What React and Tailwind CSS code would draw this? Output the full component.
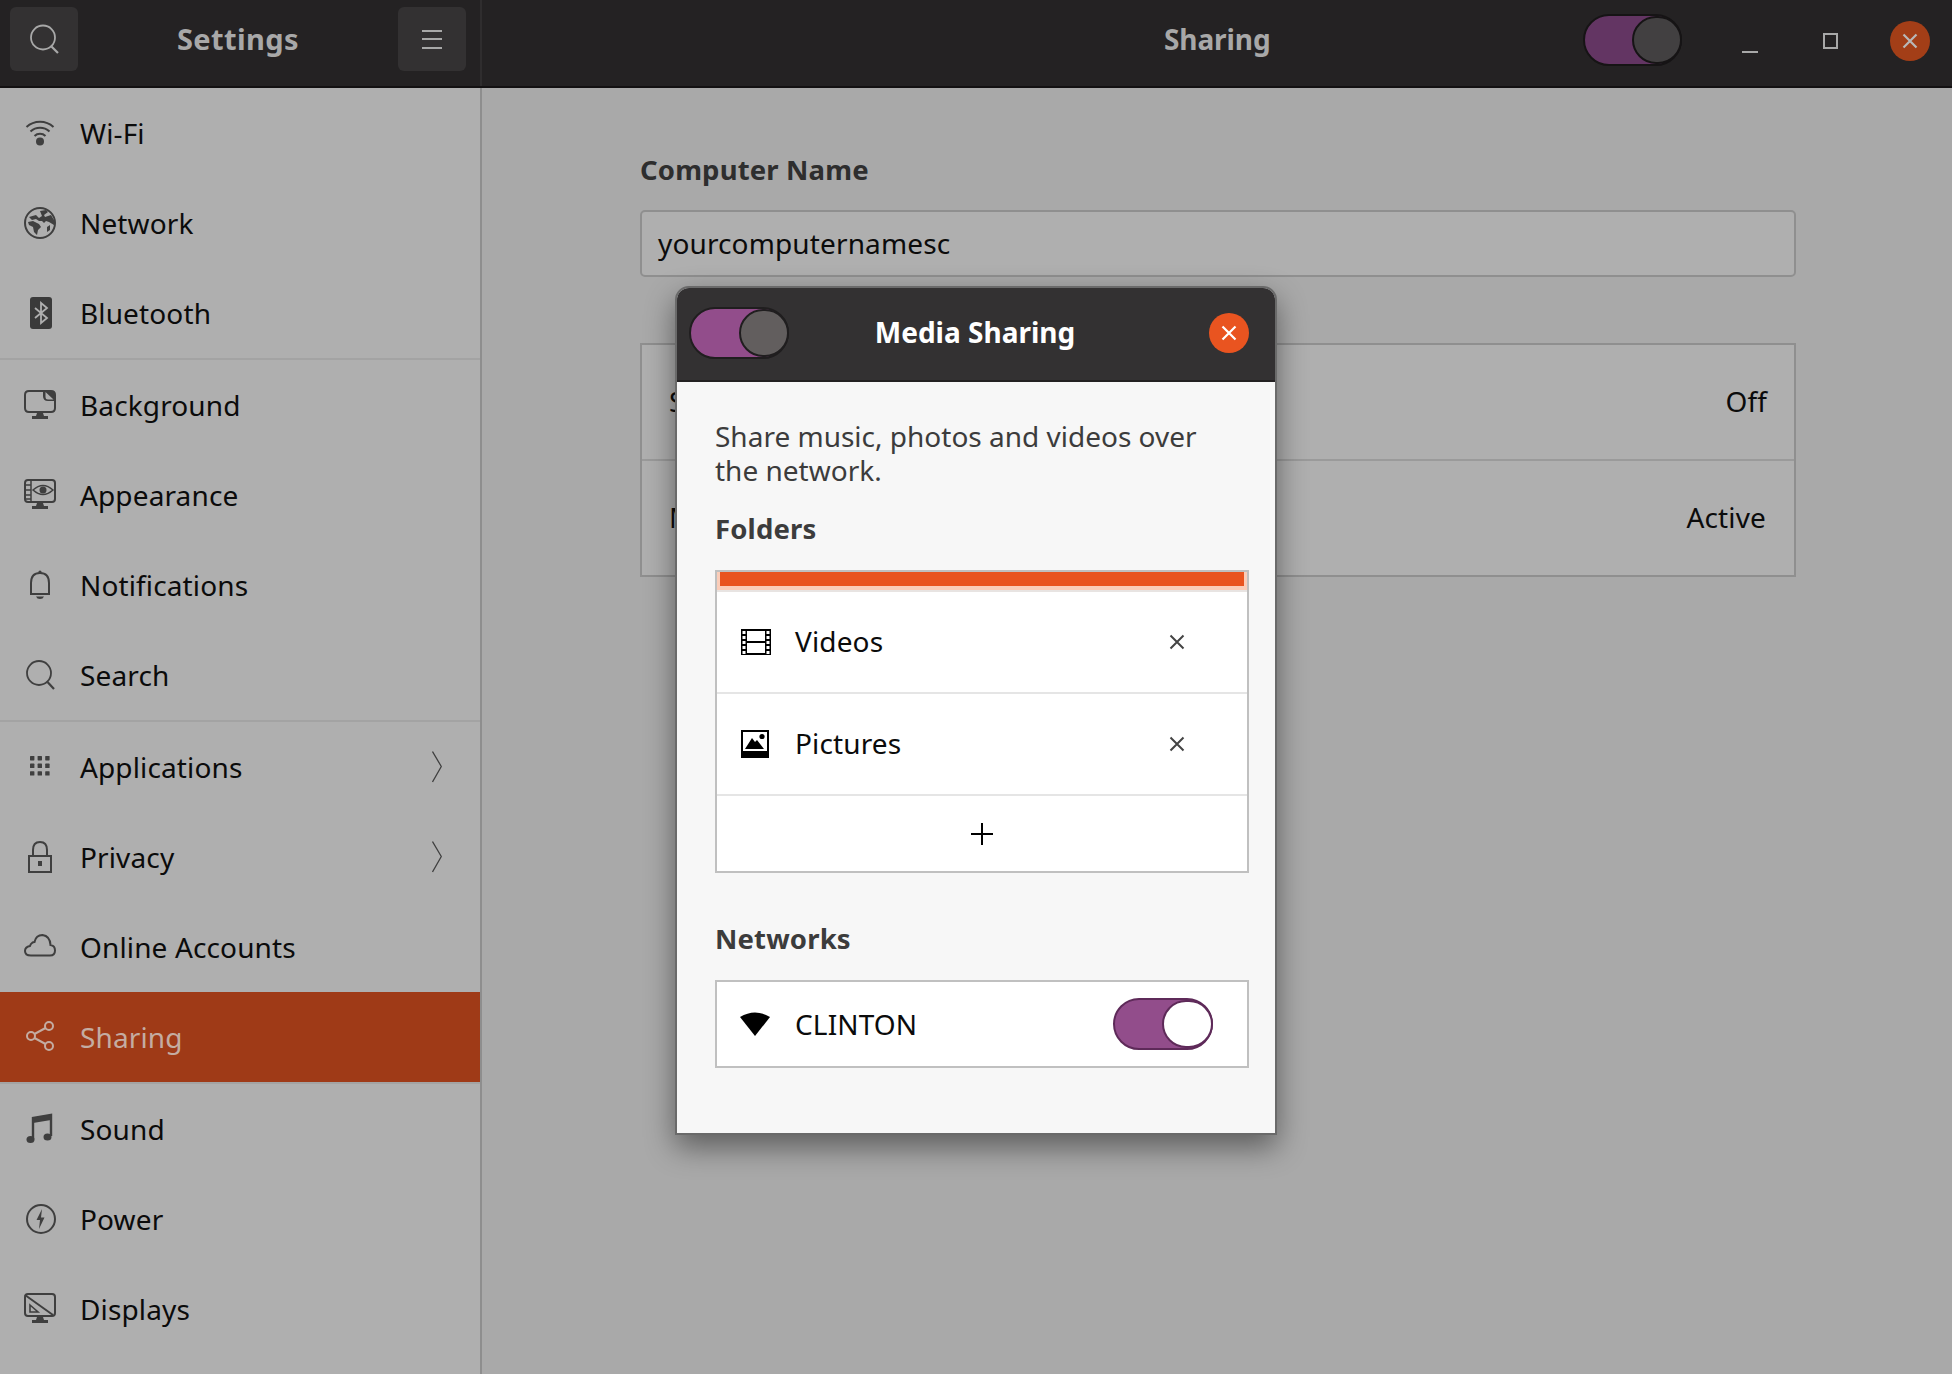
import React from "react";

const FONT = "font-['Noto_Sans','Open_Sans',sans-serif]";

const IconBox = ({ children, color = "#3f3f3f" }) => (
  <svg width="32" height="32" viewBox="0 0 32 32" fill="none" stroke={color} strokeWidth="2" className="shrink-0 -mt-[1px]">
    {children}
  </svg>
);

const icons = {
  wifi: (
    <>
      <path d="M2.5 10 A20 20 0 0 1 29.5 10" />
      <path d="M6.5 14.5 A14 14 0 0 1 25.5 14.5" />
      <path d="M10.5 19 A8 8 0 0 1 21.5 19" />
      <circle cx="16" cy="24.5" r="4" fill="#3f3f3f" stroke="none" />
    </>
  ),
  globe: (
    <>
      <circle cx="16" cy="16" r="15" />
      <path fill="#3f3f3f" stroke="none" d="M5 10 L12 8 L15 11 L18 9 L16 4 L22 3 L24 5 L20 8 L21 10 L27 8 L30 13 L30 18 L25 15 L22 14 L20 16 L18 14 L15 14 L12 12 L8 13 Z" />
      <path fill="#3f3f3f" stroke="none" d="M4 15 L9 14 L15 17 L17 20 L14 23 L13 28 L10 25 L9 20 L5 18 Z" />
      <path fill="#3f3f3f" stroke="none" d="M23 20 L26 18 L26 23 L23 25 Z" />
    </>
  ),
  bluetooth: (
    <>
      <rect x="6" y="0" width="22" height="32" rx="3" fill="#3a3a3a" stroke="none" />
      <path d="M11 11 L23 21 L17 26 L17 6 L23 11 L11 21" stroke="#afafaf" strokeWidth="1.8" />
    </>
  ),
  background: (
    <>
      <path d="M20 2 H5 Q1 2 1 6 V19 Q1 23 5 23 H27 Q31 23 31 19 V11" />
      <path d="M19 1 H27 Q32 1 32 6 V12 H24 Q19 12 19 7 Z" fill="#3f3f3f" stroke="none" />
      <path d="M21.5 3 L29.5 10.5 H24 Q21.5 10.5 21.5 8 Z" fill="#afafaf" stroke="none" />
      <path d="M13 24 H19 L20 27 H24 V30 H8 V27 H12 Z" fill="#3f3f3f" stroke="none" />
    </>
  ),
  appearance: (
    <>
      <rect x="1" y="1" width="30" height="22" rx="3" />
      <path d="M7 1 V23 M1 6 H7 M1 11 H7 M1 16 H7 M1 20 H7" strokeWidth="1.5" />
      <path d="M9 11 Q19 2 29 11 Q19 20 9 11 Z" strokeWidth="1.5" fill="#afafaf" />
      <circle cx="19" cy="11" r="3.5" fill="#3f3f3f" stroke="none" />
      <path d="M13 24 H19 L20 27 H24 V30 H8 V27 H12 Z" fill="#3f3f3f" stroke="none" />
    </>
  ),
  bell: (
    <>
      <circle cx="16" cy="3" r="1.6" fill="#3f3f3f" stroke="none" />
      <path d="M7 24 V14 Q7 4 16 4 Q25 4 25 14 V24 M6 25 H26" />
      <path d="M12 27.5 H20 Q19 30 16 30 Q13 30 12 27.5 Z" fill="#3f3f3f" stroke="none" />
    </>
  ),
  search: (
    <>
      <circle cx="15" cy="14" r="12" strokeWidth="1.8" />
      <path d="M23.5 23 L30 30" strokeWidth="2.2" />
    </>
  ),
  apps: (
    <g fill="#3f3f3f" stroke="none">
      {[0, 1, 2].flatMap((r) =>
        [0, 1, 2].map((c) => <rect key={`${r}${c}`} x={6 + c * 7.6} y={5 + r * 7.6} width="4.4" height="4.4" rx="0.6" />)
      )}
    </g>
  ),
  lock: (
    <>
      <path d="M9 14 V9 Q9 1 16 1 Q23 1 23 9 V14" />
      <rect x="5" y="15" width="22" height="16" strokeWidth="2" />
      <rect x="14" y="20" width="4" height="5" fill="#3f3f3f" stroke="none" />
    </>
  ),
  cloud: <path d="M7 24.5 H26 Q31 24.5 31 19.5 Q31 14.5 26.5 14 Q26 5 18.5 4 Q12 4 10.5 11 Q9 11 8 12 Q6.5 13 6 15 Q1 16 1 20 Q1 24.5 7 24.5 Z" />,
  share: (
    <>
      <circle cx="25" cy="5" r="4" />
      <circle cx="7" cy="15" r="4" />
      <circle cx="25" cy="25" r="4" />
      <path d="M10.5 13 L21.5 7 M10.5 17 L21.5 23" />
    </>
  ),
  sound: (
    <>
      <path d="M9 26 V5 L27 2 V23" strokeWidth="2.4" />
      <path d="M9 5 L27 2 V7 L9 10 Z" fill="#3f3f3f" stroke="none" />
      <ellipse cx="6.5" cy="26.5" rx="4" ry="3.6" fill="#3f3f3f" stroke="none" />
      <ellipse cx="23.5" cy="24" rx="4" ry="3.6" fill="#3f3f3f" stroke="none" />
    </>
  ),
  power: (
    <>
      <circle cx="17" cy="16" r="14" />
      <path d="M18 6 L12.5 17 H16 L15 26 L20.5 14.5 H17 Z" fill="#3f3f3f" stroke="none" />
    </>
  ),
  displays: (
    <>
      <rect x="1" y="1" width="30" height="22" rx="3" />
      <path d="M1 2 L29 22" />
      <path d="M6 12 L14 19 H6 Z" strokeWidth="1.6" />
      <path d="M13 24 H19 L20 27 H24 V30 H8 V27 H12 Z" fill="#3f3f3f" stroke="none" />
    </>
  ),
};

const Chevron = () => (
  <svg width="10" height="32" viewBox="0 0 10 32" fill="none" stroke="#3f3f3f" strokeWidth="1.3" className="shrink-0">
    <path d="M0.5 0.5 L9.3 15.5 L0.5 31" />
  </svg>
);

const Row = ({ icon, label, chevron, active }) => (
  <div className={`flex items-center h-[90px] pl-6 pr-[38px] ${active ? "bg-[#9f3a17] text-[#c4aca2]" : "text-[#0b0b0b]"}`}>
    <IconBox color={active ? "#c4aca2" : "#3f3f3f"}>{icons[icon]}</IconBox>
    <span className="ml-[24px] flex-1 text-[28px] tracking-[0.13px]">{label}</span>
    {chevron && <Chevron />}
  </div>
);

const Sep = () => <div className="h-[2px] bg-[#a3a3a3]" />;

const Toggle = ({ track, knob, border, className = "", w = "w-[97px]", kw = "w-[51px]", h = "h-[52px]" }) => (
  <div className={`flex justify-end rounded-full border-2 ${w} ${h} ${track} ${border} ${className}`}>
    <div className={`h-full rounded-full border-2 -mr-[2px] ${kw} ${knob} ${border}`} />
  </div>
);

const XIcon = ({ size = 16, color = "#444", sw = 2 }) => (
  <svg width={size} height={size} viewBox="0 0 16 16" fill="none" stroke={color} strokeWidth={sw}>
    <path d="M1.5 1.5 L14.5 14.5 M14.5 1.5 L1.5 14.5" />
  </svg>
);

const FolderRow = ({ icon, label }) => (
  <div className="flex items-center h-[100px] pl-[24px] pr-[62px]">
    <div className="w-[30px] flex shrink-0">{icon}</div>
    <span className="ml-[24px] flex-1 text-[28px] tracking-[0.13px] text-[#0b0b0b] -mt-[2px]">{label}</span>
    <XIcon />
  </div>
);

const FilmIcon = () => (
  <svg width="30" height="26" viewBox="0 0 30 26" fill="none">
    <rect x="0" y="0" width="30" height="26" fill="#000" />
    <rect x="6" y="2" width="18" height="10" fill="#fff" />
    <rect x="6" y="14" width="18" height="10" fill="#fff" />
    {[2, 7, 12, 17, 22].map((y) => (
      <g key={y} fill="#fff">
        <rect x="1.5" y={y} width="3" height="3" />
        <rect x="25.5" y={y} width="3" height="3" />
      </g>
    ))}
  </svg>
);

const PictureIcon = () => (
  <svg width="28" height="28" viewBox="0 0 28 28" className="-mt-[1px]">
    <rect x="0" y="0" width="28" height="28" fill="#000" />
    <rect x="2" y="2" width="24" height="19" fill="#fff" />
    <path d="M4 19 L11 8 L14 12 L16 10 L23 19 Z" fill="#000" />
    <circle cx="21" cy="6.5" r="2.6" fill="#000" />
  </svg>
);

export default function App() {
  return (
    <div className={`relative w-[1952px] h-[1374px] overflow-hidden bg-[#a9a9a9] flex flex-col ${FONT}`}>
      {/* Header bar */}
      <header className="h-[88px] shrink-0 flex bg-[#242223] border-b-2 border-[#131112]">
        <div className="w-[482px] shrink-0 flex items-center justify-between pl-[10px] pr-[14px] border-r-2 border-[#2f2d2e]">
          <div className="w-[68px] h-[64px] -mt-[8px] rounded-[6px] bg-[#333132] flex items-center justify-center">
            <svg width="32" height="32" viewBox="0 0 32 32" fill="none" stroke="#a8a8a8" strokeWidth="1.8" className="-ml-[1px]">
              <circle cx="15" cy="14.5" r="12" />
              <path d="M23.5 23.5 L30 30" strokeWidth="2.2" />
            </svg>
          </div>
          <span className="text-[29px] font-bold tracking-[0.4px] text-[#a8a8a8] -mt-[9px]">Settings</span>
          <div className="w-[68px] h-[64px] -mt-[8px] rounded-[6px] bg-[#333132] flex flex-col items-center justify-center gap-[6.5px]">
            <div className="w-[20px] h-[2px] bg-[#a8a8a8]" />
            <div className="w-[20px] h-[2px] bg-[#a8a8a8]" />
            <div className="w-[20px] h-[2px] bg-[#a8a8a8]" />
          </div>
        </div>
        <div className="flex-1 relative flex items-center">
          <span className="ml-[682px] text-[28px] font-bold text-[#a8a8a8] tracking-[-0.1px] -mt-[9px]">Sharing</span>
          <div className="ml-auto flex items-center pr-[22px] -mt-[6px]">
            <Toggle w="w-[99px]" kw="w-[50px]" h="h-[52px]" track="bg-[#633563]" knob="bg-[#424041]" border="border-[#161415]" />
            <div className="ml-[60px] w-[16px] h-[2px] mt-[24px] bg-[#a8a8a8]" />
            <div className="ml-[65px] w-[15px] h-[16px] border-2 border-[#a8a8a8] mt-[1px]" />
            <div className="ml-[52px] w-[40px] h-[40px] rounded-full bg-[#a33e17] flex items-center justify-center mt-[2px]">
              <XIcon size={16} color="#b8b8b8" sw={2.2} />
            </div>
          </div>
        </div>
      </header>

      <div className="flex-1 flex min-h-0">
        {/* Sidebar */}
        <aside className="w-[482px] shrink-0 bg-[#afafaf] border-r-2 border-[#8e8e8e]">
          <Row icon="wifi" label="Wi-Fi" />
          <Row icon="globe" label="Network" />
          <Row icon="bluetooth" label="Bluetooth" />
          <Sep />
          <Row icon="background" label="Background" />
          <Row icon="appearance" label="Appearance" />
          <Row icon="bell" label="Notifications" />
          <Row icon="search" label="Search" />
          <Sep />
          <Row icon="apps" label="Applications" chevron />
          <Row icon="lock" label="Privacy" chevron />
          <Row icon="cloud" label="Online Accounts" />
          <Row icon="share" label="Sharing" active />
          <Sep />
          <Row icon="sound" label="Sound" />
          <Row icon="power" label="Power" />
          <Row icon="displays" label="Displays" />
        </aside>

        {/* Main panel */}
        <main className="flex-1 pl-[158px] pr-[156px] pt-[64px]">
          <div className="text-[27.5px] font-bold text-[#2e2e2e] tracking-[0.15px] leading-[36px]">Computer Name</div>
          <div className="mt-[22px] h-[67px] rounded-[5px] border-2 border-[#8f8f8f] bg-[#afafaf] flex items-center pl-[16px] pb-[2px] text-[28px] tracking-[0.13px] text-[#0b0b0b]">
            yourcomputernamesc
          </div>
          <div className="mt-[66px] border-2 border-[#8f8f8f] bg-[#afafaf] text-[28px] tracking-[0.13px] text-[#0b0b0b]">
            <div className="h-[114px] flex items-center justify-between pl-[27px] pr-[27px] pb-[2px]">
              <span>Screen Sharing</span>
              <span>Off</span>
            </div>
            <div className="h-[2px] bg-[#9a9a9a]" />
            <div className="h-[114px] flex items-center justify-between pl-[27px] pr-[28px] pb-[2px]">
              <span>Media Sharing</span>
              <span>Active</span>
            </div>
          </div>
        </main>
      </div>

      {/* Media Sharing dialog */}
      <div className="absolute left-[675px] top-[286px] w-[602px] h-[849px] rounded-t-[14px] border-2 border-[#6a6a6a] bg-[#f7f7f7] shadow-[0_12px_30px_rgba(0,0,0,0.45)] flex flex-col overflow-hidden">
        <div className="relative h-[94px] shrink-0 bg-[#333132] border-b-2 border-[#232122] flex items-center justify-center">
          <Toggle className="absolute left-[12px] top-[19px]" w="w-[100px]" kw="w-[50px]" h="h-[52px]" track="bg-[#924d8b]" knob="bg-[#625e5e]" border="border-[#201e1f]" />
          <span className="text-[28px] font-bold text-white -mt-[5px] -ml-[2px]">Media Sharing</span>
          <div className="absolute left-[532px] top-[25px] w-[40px] h-[40px] rounded-full bg-[#e95420] flex items-center justify-center">
            <XIcon size={16} color="#ffffff" sw={2.2} />
          </div>
        </div>
        <div className="flex-1 pl-[38px] pr-[20px] pt-[37px]">
          <p className="text-[28px] leading-[34px] text-[#3c3c3c] whitespace-nowrap">
            Share music, photos and videos over<br />the network.
          </p>
          <div className="mt-[25px] text-[27.5px] font-bold leading-[34px] tracking-[0.15px] text-[#3c3c3c]">Folders</div>
          <div className="mt-[24px] w-[534px] h-[303px] border-2 border-[#c0c0c0] bg-white flex flex-col">
            <div className="h-[20px] shrink-0 px-[2px] bg-[#fbcdb9] border-b-2 border-[#e8e4e2]">
              <div className="mx-[1px] h-[14px] bg-[#e95420]" />
            </div>
            <FolderRow icon={<FilmIcon />} label="Videos" />
            <div className="h-[2px] bg-[#e5e5e5]" />
            <FolderRow icon={<PictureIcon />} label="Pictures" />
            <div className="h-[2px] bg-[#e5e5e5]" />
            <div className="flex-1 flex items-center justify-center">
              <svg width="22" height="22" viewBox="0 0 22 22" stroke="#000" strokeWidth="2">
                <path d="M11 0 V22 M0 11 H22" />
              </svg>
            </div>
          </div>
          <div className="mt-[49px] text-[27.5px] font-bold leading-[34px] tracking-[0.15px] text-[#3c3c3c]">Networks</div>
          <div className="mt-[24px] w-[534px] h-[88px] border-2 border-[#c0c0c0] bg-white flex items-center pl-[23px] pr-[34px]">
            <svg width="30" height="26" viewBox="0 0 30 26" className="shrink-0">
              <path d="M0 6 Q15 -3 30 6 L15 25 Z" fill="#000" />
            </svg>
            <span className="ml-[25px] flex-1 text-[28px] tracking-[0.13px] text-[#0b0b0b]">CLINTON</span>
            <Toggle w="w-[100px]" kw="w-[51px]" h="h-[52px]" track="bg-[#924d8b]" knob="bg-white" border="border-[#5e2a59]" />
          </div>
        </div>
      </div>
    </div>
  );
}
